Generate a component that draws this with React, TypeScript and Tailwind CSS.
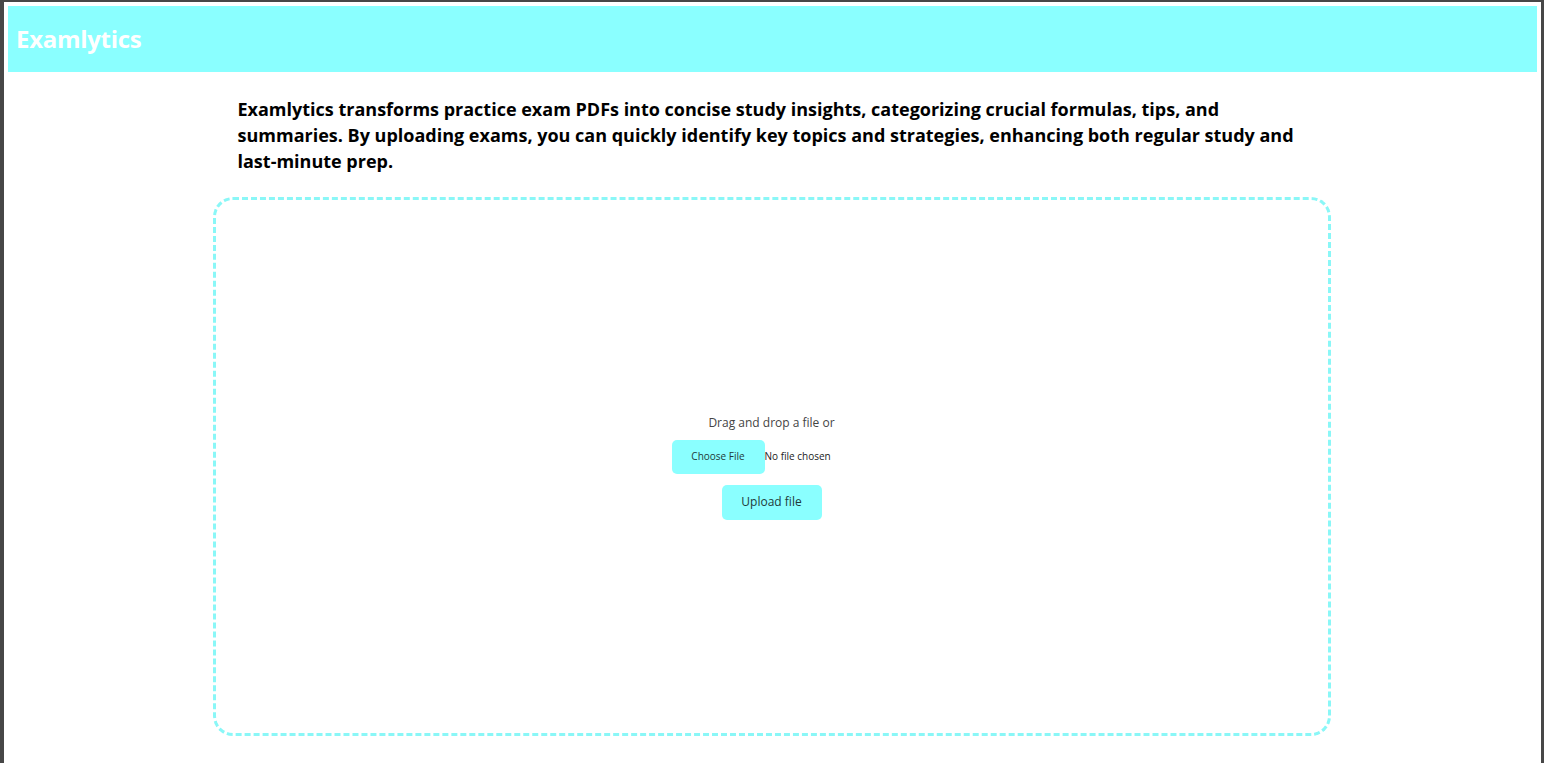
export default function App() {
  return (
    <div className="h-[763px] w-[1544px] overflow-hidden bg-[#474747] pl-[4px] pr-[3px] pt-[2px]">
      <div className="flex h-full flex-col bg-white px-[4px] pt-[4px]" style={{ fontFamily: '"Open Sans", "Noto Sans", sans-serif' }}>
        {/* Header */}
        <header className="flex h-[66px] shrink-0 items-center bg-[#8affff] px-[8px]">
          <h1 className="text-[24px] font-bold tracking-[-0.3px] text-white">Examlytics</h1>
        </header>

        <main className="flex flex-col items-center">
          <p className="mt-[24px] w-[1070px] text-[18px] font-bold leading-[26px] text-black">
            Examlytics transforms practice exam PDFs into concise study insights, categorizing crucial formulas, tips, and
            summaries. By uploading exams, you can quickly identify key topics and strategies, enhancing both regular study and
            last-minute prep.
          </p>

          {/* Drop zone */}
          <div className="mt-[23px] mr-[2px] flex h-[539px] w-[1118px] flex-col items-center justify-center rounded-[20px] border-[3px] border-dashed border-[#8af7f7]">
            <span className="text-[12px] text-[#444]">Drag and drop a file or</span>
            <div className="mt-[8px] flex w-[200px] items-center">
              <button className="h-[34px] w-[93px] rounded-[5px] bg-[#8affff] text-[10px] text-[#1f3a3a]">Choose File</button>
              <span className="text-[10px] text-[#222]">No file chosen</span>
            </div>
            <button className="mt-[11px] h-[35px] w-[100px] rounded-[5px] bg-[#8affff] text-[12px] text-[#1f3a3a]">Upload file</button>
          </div>
        </main>
      </div>
    </div>
  );
}
